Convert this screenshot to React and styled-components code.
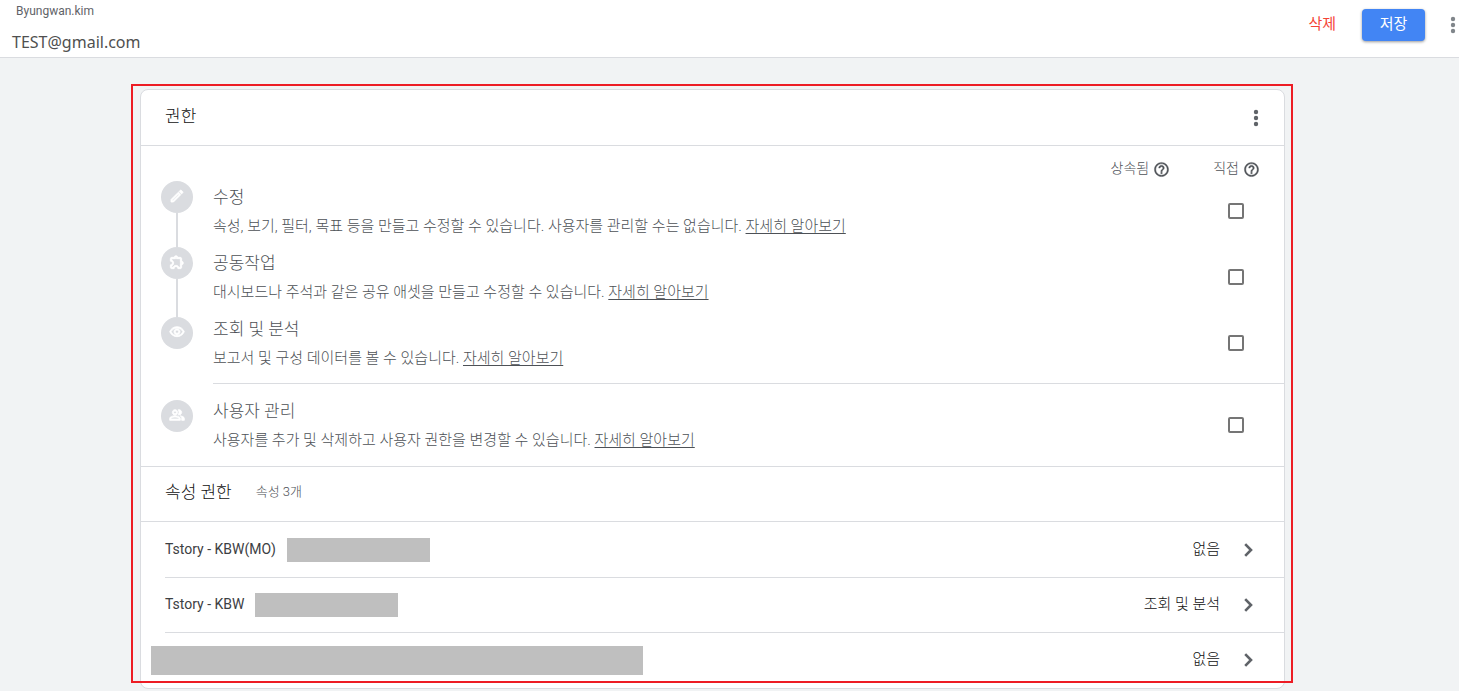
import React from 'react'
import styled, { createGlobalStyle } from 'styled-components'
import {
  MdHelpOutline,
  MdOutlineEdit,
  MdOutlineExtension,
  MdOutlinePeopleAlt,
  MdOutlineVisibility,
} from 'react-icons/md'

const GlobalStyle = createGlobalStyle`
  * {
    box-sizing: border-box;
  }

  body {
    margin: 0;
    background: #f1f3f4;
    color: #202124;
    font-family: Roboto, "Noto Sans CJK KR", sans-serif;
    font-size: 14px;
  }

  h1, h2, h3, p, ul {
    margin: 0;
    padding: 0;
    font-weight: 400;
  }

  button {
    border: 0;
    padding: 0;
    background: none;
    font-family: inherit;
    cursor: pointer;
  }
`

const TopBar = styled.header`
  display: flex;
  justify-content: space-between;
  height: 58px;
  padding-right: 3px;
  background: #fff;
  border-bottom: 1px solid #dadce0;
`

const Account = styled.div`
  padding-left: 12px;

  p {
    padding: 2px 0 0 4px;
    font-size: 12px;
    line-height: 18px;
    color: #5f6368;
  }

  h1 {
    padding-top: 10px;
    font-family: "Noto Sans", sans-serif;
    font-size: 16px;
    line-height: 24px;
    color: #505050;
  }
`

const Actions = styled.div`
  display: flex;
  align-items: center;
  gap: 25px;
  height: 50px;
`

const DeleteButton = styled.button`
  padding: 0 1px 2px 0;
  font-size: 15px;
  line-height: 24px;
  color: #f44336;
`

const SaveButton = styled.button`
  width: 63px;
  height: 32px;
  padding-bottom: 2px;
  border-radius: 4px;
  background: #4285f4;
  color: #fff;
  font-size: 15px;
  line-height: 24px;
  box-shadow: 0 1px 3px rgba(0, 0, 0, 0.4);
`

const MenuButton = styled.button`
  display: flex;
  color: ${({ $light }) => ($light ? '#80868b' : '#5f6368')};
`

const Main = styled.main`
  padding: 31px 174px 2px 140px;
`

const Highlight = styled.div`
  position: relative;

  &::after {
    content: "";
    position: absolute;
    inset: -5px -8px 6px -9px;
    border: 2px solid #ed1c24;
    pointer-events: none;
  }
`

const Card = styled.section`
  background: #fff;
  border: 1px solid #dadce0;
  border-radius: 8px;
`

const CardHeader = styled.div`
  display: flex;
  align-items: center;
  gap: 24px;
  height: ${({ $compact }) => ($compact ? '55px' : '56px')};
  padding: 0 25px 0 24px;
  border-bottom: 1px solid #dadce0;

  h2 {
    padding-bottom: 4px;
    font-size: 17px;
    font-weight: 300;
    line-height: 24px;
    color: #111;
  }

  span {
    padding-bottom: 4px;
    font-size: 13px;
    font-weight: 300;
    line-height: 24px;
    color: #4d5156;
  }

  button {
    margin-left: auto;
  }
`

const ColumnHeads = styled.div`
  display: flex;
  justify-content: flex-end;
  gap: 43px;
  height: 32px;
  padding: 14px 24px 0 0;
`

const ColumnHead = styled.div`
  display: flex;
  align-items: center;
  gap: 4px;
  height: 18px;
  font-size: 14px;
  font-weight: 300;
  line-height: 16px;
  color: #4d5156;

  span {
    padding-bottom: 2px;
  }

  path:not([fill="none"]) {
    stroke-width: 0.5;
  }
`

const Group = styled.div`
  display: grid;
  grid-template-columns: 72px 1fr;
`

const Rail = styled.div`
  display: flex;
  flex-direction: column;
  align-items: center;
  padding: ${({ $top }) => $top}px 20px 0;
`

const Badge = styled.span`
  display: flex;
  align-items: center;
  justify-content: center;
  width: 32px;
  height: 32px;
  padding-bottom: 2px;
  border-radius: 50%;
  background: #dadce0;
  color: #fff;

  path:not([fill="none"]) {
    stroke-width: 1.2;
  }
`

const Connector = styled.span`
  width: 2px;
  height: ${({ $length }) => $length}px;
  background: #dadce0;
`

const Permissions = styled.div`
  padding: ${({ $divided }) => ($divided ? '0 0 7px' : '8px 0')};
  border-bottom: ${({ $divided }) => ($divided ? '1px solid #dadce0' : '0')};
`

const Permission = styled.div`
  display: flex;
  align-items: center;
  justify-content: space-between;
  height: 66px;
  padding-right: 40px;
  color: #4d5156;

  label {
    display: block;
    font-size: 17px;
    font-weight: 300;
    line-height: 32px;
  }

  p {
    padding-bottom: 2px;
    font-size: 15px;
    font-weight: 300;
    line-height: 26px;
  }

  a {
    color: inherit;
    text-underline-offset: 2px;
  }
`

const Checkbox = styled.input`
  appearance: none;
  width: 16px;
  height: 16px;
  margin: 0;
  border: 2px solid #757575;
  border-radius: 2px;
`

const PropertySection = styled.div`
  border-top: 1px solid #dadce0;
`

const PropertyList = styled.ul`
  padding: 0 0 1px 24px;
  list-style: none;
`

const Property = styled.li`
  display: flex;
  align-items: center;
  gap: 11px;
  height: 55px;
  padding-right: 31px;

  & + & {
    border-top: 1px solid #dadce0;
  }

  button {
    display: flex;
    align-items: center;
    gap: 24px;
    margin-left: auto;
    font-size: 15px;
    font-weight: 300;
    line-height: 24px;
    color: #111;
  }

  button span {
    padding-bottom: 2px;
  }
`

const PropertyName = styled.span`
  padding-bottom: 2px;
  color: #3c4043;
`

const Mask = styled.span`
  width: ${({ $wide }) => ($wide ? '492px' : '143px')};
  height: ${({ $wide }) => ($wide ? '29px' : '24px')};
  margin-left: ${({ $wide }) => ($wide ? '-14px' : '0')};
  background: #bfbfbf;
`

const Dots = () => (
  <svg width="6" height="18" viewBox="0 0 6 18" fill="currentColor">
    <circle cx="3" cy="3" r="2.2" />
    <circle cx="3" cy="9" r="2.2" />
    <circle cx="3" cy="15" r="2.2" />
  </svg>
)

const Chevron = () => (
  <svg width="9" height="14" viewBox="0 0 9 14" fill="none" stroke="#5f6368" strokeWidth="2.6">
    <path d="M1.2 1.2 7 7l-5.8 5.8" />
  </svg>
)

const editing = [
  { id: 'edit', title: '수정', text: '속성, 보기, 필터, 목표 등을 만들고 수정할 수 있습니다. 사용자를 관리할 수는 없습니다.' },
  { id: 'collaborate', title: '공동작업', text: '대시보드나 주석과 같은 공유 애셋을 만들고 수정할 수 있습니다.' },
  { id: 'read', title: '조회 및 분석', text: '보고서 및 구성 데이터를 볼 수 있습니다.' },
]

const managing = [
  { id: 'manage', title: '사용자 관리', text: '사용자를 추가 및 삭제하고 사용자 권한을 변경할 수 있습니다.' },
]

const properties = [
  { name: 'Tstory - KBW(MO)', role: '없음' },
  { name: 'Tstory - KBW', role: '조회 및 분석' },
  { name: '', role: '없음' },
]

const PermissionRows = ({ items }) =>
  items.map(({ id, title, text }) => (
    <Permission key={id}>
      <div>
        <label htmlFor={id}>{title}</label>
        <p>{text} <a href="#">자세히 알아보기</a></p>
      </div>
      <Checkbox type="checkbox" id={id} />
    </Permission>
  ))

const App = () => {
  return (
    <>
      <GlobalStyle />
      <TopBar>
        <Account>
          <p>Byungwan.kim</p>
          <h1>TEST@gmail.com</h1>
        </Account>
        <Actions>
          <DeleteButton>삭제</DeleteButton>
          <SaveButton>저장</SaveButton>
          <MenuButton $light aria-label="더보기"><Dots /></MenuButton>
        </Actions>
      </TopBar>

      <Main>
        <Highlight>
          <Card>
            <CardHeader>
              <h2>권한</h2>
              <MenuButton aria-label="더보기"><Dots /></MenuButton>
            </CardHeader>

            <ColumnHeads>
              <ColumnHead><span>상속됨</span> <MdHelpOutline size={17} /></ColumnHead>
              <ColumnHead><span>직접</span> <MdHelpOutline size={17} /></ColumnHead>
            </ColumnHeads>

            <Group>
              <Rail $top={3}>
                <Badge><MdOutlineEdit size={16} /></Badge>
                <Connector $length={34} />
                <Badge><MdOutlineExtension size={16} /></Badge>
                <Connector $length={38} />
                <Badge><MdOutlineVisibility size={16} /></Badge>
              </Rail>
              <Permissions $divided>
                <PermissionRows items={editing} />
              </Permissions>
            </Group>

            <Group>
              <Rail $top={16}>
                <Badge><MdOutlinePeopleAlt size={16} /></Badge>
              </Rail>
              <Permissions>
                <PermissionRows items={managing} />
              </Permissions>
            </Group>

            <PropertySection>
              <CardHeader $compact>
                <h2>속성 권한</h2>
                <span>속성 3개</span>
              </CardHeader>
              <PropertyList>
                {properties.map(({ name, role }, i) => (
                  <Property key={i}>
                    {name && <PropertyName>{name}</PropertyName>}
                    <Mask $wide={!name} />
                    <button><span>{role}</span> <Chevron /></button>
                  </Property>
                ))}
              </PropertyList>
            </PropertySection>
          </Card>
        </Highlight>
      </Main>
    </>
  )
}

export default App
